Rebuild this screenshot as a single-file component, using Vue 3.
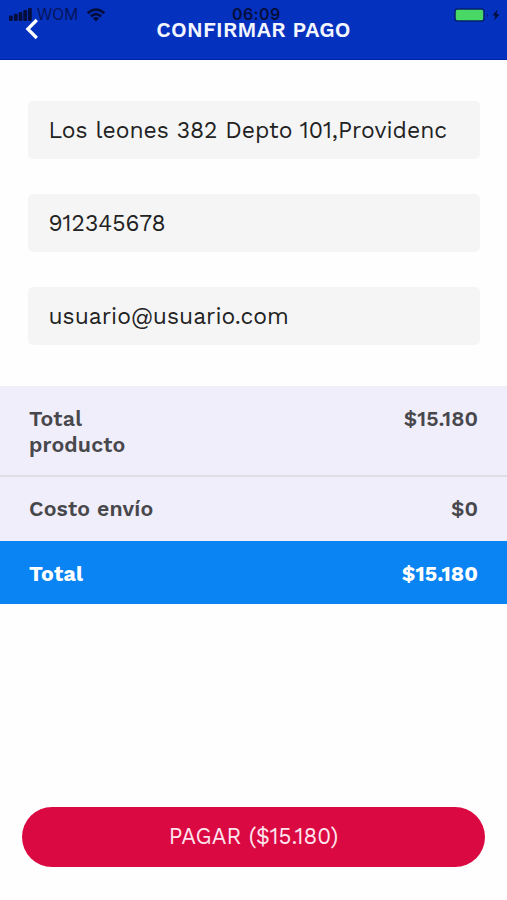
<script setup>
const fields = [
  { id: 'address', value: 'Los leones 382 Depto 101,Providenc' },
  { id: 'phone', value: '912345678' },
  { id: 'email', value: 'usuario@usuario.com' },
]
</script>

<template>
  <div class="screen">
    <header class="header">
      <div class="status">
        <svg class="signal" viewBox="0 0 24 14" width="24" height="14">
          <rect x="0" y="7.5" width="3.8" height="5.5" rx="1" />
          <rect x="4.9" y="5.8" width="3.8" height="7.2" rx="1" />
          <rect x="9.6" y="4" width="3.8" height="9" rx="1" />
          <rect x="14.3" y="2" width="3.8" height="11" rx="1" />
          <rect x="19" y="0" width="3.8" height="13" rx="1" />
        </svg>
        <span class="carrier">WOM</span>
        <svg class="wifi" viewBox="0 0 20 14" width="20" height="14">
          <path d="M1.6 5.2Q10 -2 18.4 5.2" />
          <path d="M4.8 8.4Q10 4 15.2 8.4" />
          <path class="dot" d="M6.9 10.2Q10 7.8 13.1 10.2L10 13.4Z" />
        </svg>
        <span class="clock">06:09</span>
        <svg class="battery" viewBox="0 0 48 14" width="48" height="14">
          <rect class="shell" x="1" y="1" width="29" height="12" rx="2.5" />
          <rect class="charge" x="2" y="2" width="27" height="10" rx="1.2" />
          <path class="nub" d="M33 4.7q2 2.3 0 4.6z" />
          <path class="bolt" d="M43.5 1.5L38.5 7.6H41.3L40.2 12.5L45.6 6.2H42.6Z" />
        </svg>
      </div>
      <svg class="back" viewBox="0 0 14 22" width="14" height="22">
        <path d="M11.8 2L2.8 11L11.8 20" />
      </svg>
      <h1 class="title">CONFIRMAR PAGO</h1>
    </header>

    <section class="form">
      <div v-for="f in fields" :key="f.id" class="field">
        <span>{{ f.value }}</span>
      </div>
    </section>

    <section class="summary">
      <div class="row product">
        <span class="label">Total<br />producto</span>
        <span class="amount">$15.180</span>
      </div>
      <div class="row shipping">
        <span class="label">Costo envío</span>
        <span class="amount">$0</span>
      </div>
      <div class="row total">
        <span class="label">Total</span>
        <span class="amount">$15.180</span>
      </div>
    </section>

    <footer class="footer">
      <button class="pay" type="button">PAGAR ($15.180)</button>
    </footer>
  </div>
</template>

<style>
body {
  margin: 0;
  background: #fefefe;
}
</style>

<style scoped>
.screen {
  display: flex;
  flex-direction: column;
  box-sizing: border-box;
  width: 507px;
  height: 900px;
  overflow: hidden;
  background: #fefefe;
  font-family: 'Work Sans', Inter, 'Open Sans', sans-serif;
}
.header {
  position: relative;
  box-sizing: border-box;
  display: flex;
  flex: none;
  justify-content: center;
  height: 60px;
  padding-top: 17px;
  border-bottom: 1px solid #0023a8;
  background: #0531bf;
}
.title {
  margin: 0;
  color: #f3f5ff;
  font-size: 21.2px;
  font-weight: 600;
  line-height: 25px;
  letter-spacing: 0.25px;
  white-space: nowrap;
  z-index: 1;
}
.back {
  position: absolute;
  left: 25px;
  top: 18px;
  fill: none;
  stroke: #fff;
  stroke-width: 3.2;
}
.status {
  position: absolute;
  inset: 7px 0 auto;
  height: 16px;
  color: #040e3c;
  fill: #040e3c;
  font-family: Inter, Roboto, sans-serif;
}
.signal,
.carrier,
.wifi,
.clock,
.battery {
  position: absolute;
}
.signal {
  left: 9px;
  top: 1px;
}
.carrier {
  left: 37px;
  top: -1px;
  font-size: 15.5px;
  line-height: 17px;
  color: #06145a;
}
.wifi {
  left: 86px;
  top: 1px;
  fill: none;
  stroke: #040e3c;
  stroke-width: 2.6;
}
.dot {
  fill: #040e3c;
  stroke: none;
}
.clock {
  left: 232px;
  top: -1px;
  font-size: 16px;
  font-weight: 600;
  line-height: 17px;
  letter-spacing: 0.4px;
}
.battery {
  left: 454px;
  top: 1px;
}
.shell {
  fill: #49d765;
  stroke: #06206f;
  stroke-width: 1.5;
}
.charge {
  fill: #49d765;
}
.nub {
  fill: #06206f;
}
.form {
  display: flex;
  flex: none;
  flex-direction: column;
  gap: 35px;
  padding: 41px 27px 41px 28px;
}
.field {
  display: flex;
  box-sizing: border-box;
  align-items: center;
  height: 58px;
  padding-left: 20.5px;
  border-radius: 5px;
  background: #f5f5f5;
  color: #222;
  font-size: 22.9px;
  white-space: nowrap;
}
.summary {
  flex: none;
  color: #48484c;
  font-size: 21.3px;
  font-weight: 600;
  line-height: 26px;
}
.row {
  display: flex;
  box-sizing: border-box;
  justify-content: space-between;
  padding: 20px 29px 0;
  background: #f0eefb;
}
.product {
  height: 91px;
  border-bottom: 2px solid #dfdee6;
  line-height: 25.5px;
}
.shipping {
  height: 64px;
  padding-top: 19px;
}
.total {
  height: 63px;
  background: #0984f2;
  color: #fff;
  font-weight: 700;
}
.label {
  letter-spacing: 0.15px;
}
.total .amount {
  letter-spacing: 0.1px;
}
.footer {
  display: flex;
  flex: 1;
  align-items: flex-end;
  padding: 0 22px 33px;
}
.pay {
  flex: 1;
  height: 60px;
  padding: 0 0 2px;
  border: 0;
  border-radius: 30px;
  background: #da0942;
  color: #ffe3ed;
  font: inherit;
  font-size: 22.3px;
}
</style>
